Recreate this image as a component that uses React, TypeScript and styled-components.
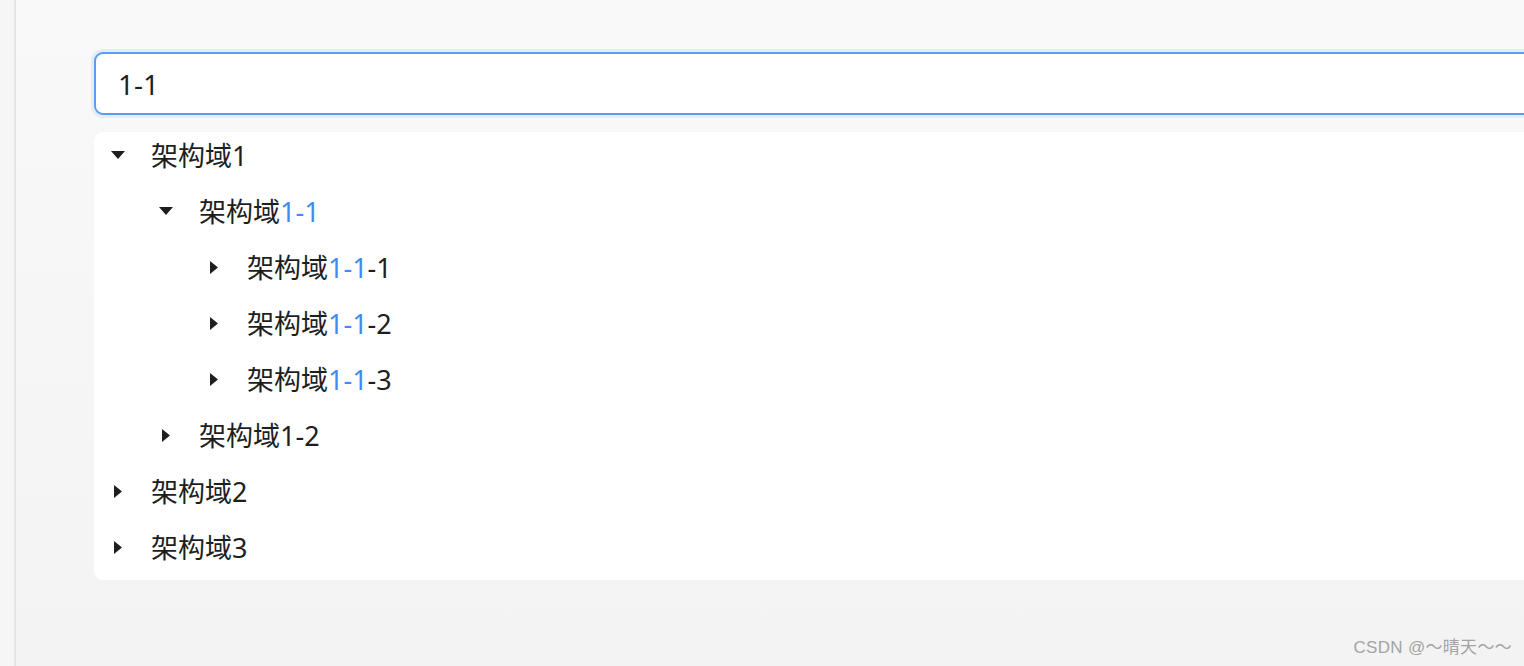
import React from "react";
import styled, { createGlobalStyle } from "styled-components";

const GlobalStyle = createGlobalStyle`
  html, body {
    margin: 0;
    padding: 0;
    height: 100%;
    overflow: hidden;
  }
  body {
    font-family: "Noto Sans", "Noto Sans CJK SC", sans-serif;
    background: linear-gradient(#f9f9f9, #f3f3f3);
  }
`;

const Page = styled.div`
  position: relative;
  display: flex;
  height: 666px;
  width: 1524px;
  overflow: hidden;
`;

const SideStrip = styled.div`
  width: 14px;
  flex: none;
  background: #f6f6f6;
`;

const Divider = styled.div`
  width: 2px;
  flex: none;
  background: #e6e6e6;
`;

const Main = styled.main`
  flex: 1;
  padding: 52px 0 0 78px;
  display: flex;
  flex-direction: column;
  gap: 17px;
  min-width: 0;
`;

const SearchInput = styled.input`
  box-sizing: border-box;
  width: 1500px;
  height: 63px;
  border: 2px solid #5b9cf6;
  border-radius: 9px;
  box-shadow: 0 0 0 3px #e3ecf8;
  padding: 0 22px;
  font-family: "Noto Sans", "Noto Sans CJK SC", sans-serif;
  font-size: 28px;
  color: #1f1f1f;
  background: #fff;
  outline: none;
`;

const TreePanel = styled.ul`
  box-sizing: border-box;
  width: 1500px;
  margin: 0;
  padding: 0;
  list-style: none;
  background: #fff;
  border-radius: 9px;
`;

const Row = styled.li<{ $level: number }>`
  display: flex;
  align-items: center;
  height: 56px;
  box-sizing: border-box;
  padding: 0 0 10px ${(p) => 12 + p.$level * 48}px;
  font-size: 27px;
  color: #1e1e1e;
  white-space: nowrap;
`;

const Label = styled.span`
  line-height: 1;
`;

const CaretBox = styled.span`
  width: 24px;
  height: 24px;
  display: flex;
  align-items: center;
  justify-content: center;
  margin-right: 21px;
  flex: none;
`;

const Hit = styled.span`
  color: #3f8cf4;
`;

const Watermark = styled.div`
  position: absolute;
  right: 12px;
  bottom: 8px;
  font-family: "Liberation Sans", "Noto Sans CJK SC", sans-serif;
  font-size: 17px;
  letter-spacing: 0.3px;
  color: #a3a3a3;
`;

const Caret = ({ open }: { open: boolean }) => (
  <CaretBox>
    {open ? (
      <svg width="14" height="8" viewBox="0 0 14 8">
        <polygon points="0,0 14,0 7,8" fill="#1e1e1e" />
      </svg>
    ) : (
      <svg width="8" height="13" viewBox="0 0 8 13">
        <polygon points="0,0 8,6.5 0,13" fill="#1e1e1e" />
      </svg>
    )}
  </CaretBox>
);

type Node = { level: number; open: boolean; parts: { t: string; hit?: boolean }[] };

const nodes: Node[] = [
  { level: 0, open: true, parts: [{ t: "架构域1" }] },
  { level: 1, open: true, parts: [{ t: "架构域" }, { t: "1-1", hit: true }] },
  { level: 2, open: false, parts: [{ t: "架构域" }, { t: "1-1", hit: true }, { t: "-1" }] },
  { level: 2, open: false, parts: [{ t: "架构域" }, { t: "1-1", hit: true }, { t: "-2" }] },
  { level: 2, open: false, parts: [{ t: "架构域" }, { t: "1-1", hit: true }, { t: "-3" }] },
  { level: 1, open: false, parts: [{ t: "架构域1-2" }] },
  { level: 0, open: false, parts: [{ t: "架构域2" }] },
  { level: 0, open: false, parts: [{ t: "架构域3" }] },
];

export default function App() {
  return (
    <>
      <GlobalStyle />
      <Page>
        <SideStrip />
        <Divider />
        <Main>
          <SearchInput defaultValue="1-1" />
          <TreePanel>
            {nodes.map((n, i) => (
              <Row key={i} $level={n.level}>
                <Caret open={n.open} />
                <Label>
                  {n.parts.map((p, j) => (p.hit ? <Hit key={j}>{p.t}</Hit> : <span key={j}>{p.t}</span>))}
                </Label>
              </Row>
            ))}
          </TreePanel>
        </Main>
        <Watermark>CSDN @～晴天～～</Watermark>
      </Page>
    </>
  );
}
